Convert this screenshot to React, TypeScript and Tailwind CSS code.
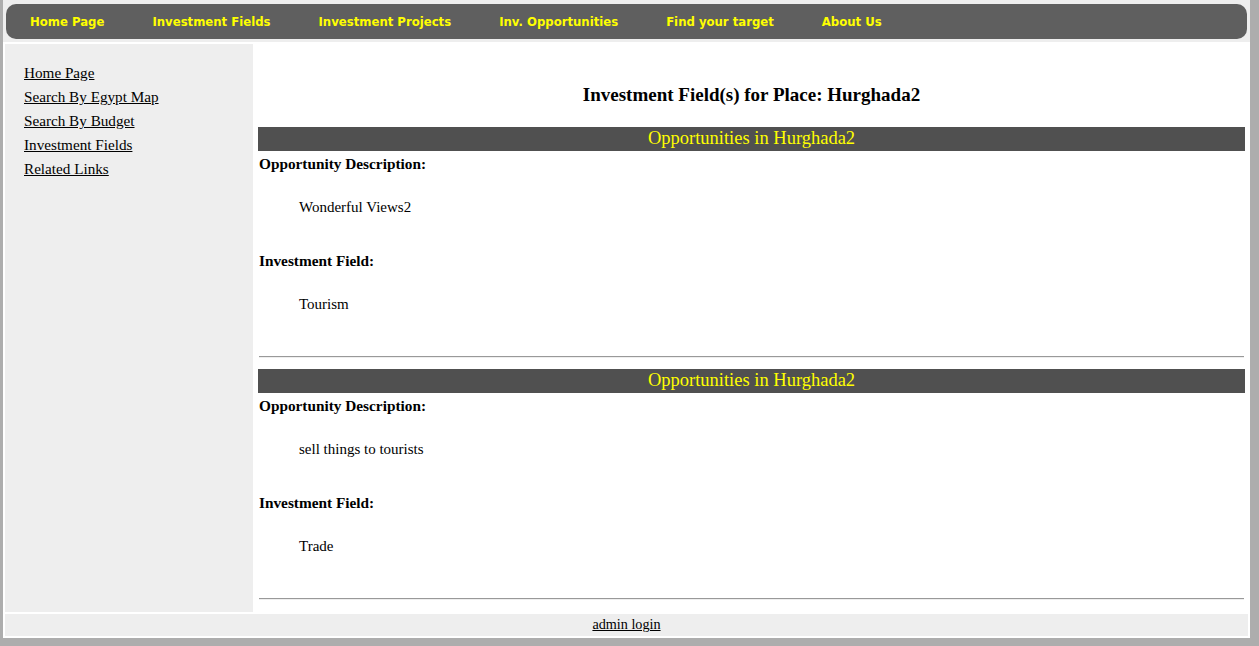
import React from 'react';

const navItems = ['Home Page', 'Investment Fields', 'Investment Projects', 'Inv. Opportunities', 'Find your target', 'About Us'];
const sideLinks = ['Home Page', 'Search By Egypt Map', 'Search By Budget', 'Investment Fields', 'Related Links'];

const opportunities = [
  { place: 'Hurghada2', description: 'Wonderful Views2', field: 'Tourism' },
  { place: 'Hurghada2', description: 'sell things to tourists', field: 'Trade' },
];

const serif = { fontFamily: '"Liberation Serif", "Times New Roman", serif' };

export default function App() {
  return (
    <div className="w-full h-[646px] bg-[#adadad] pl-[3px] pr-[9px] pb-[8px]">
      <div className="h-full bg-white flex flex-col" style={serif}>
        {/* top menu */}
        <div className="bg-[#eeeeee] pt-[4px] pb-[3px] pl-[3px] pr-[3px]">
          <div className="h-[35px] bg-[#5f5f5f] rounded-[10px] flex items-center pt-[2px]">
            {navItems.map((n) => (
              <a
                key={n}
                className="px-6 text-[11.7px] font-bold text-[#ffff00] whitespace-nowrap"
                style={{ fontFamily: '"DejaVu Sans", Verdana, sans-serif' }}
              >
                {n}
              </a>
            ))}
          </div>
        </div>

        <div className="flex-1 flex flex-col gap-[2px] p-[2px]">
          <div className="flex-1 flex gap-[2px]">
            {/* sidebar */}
            <div className="w-[248px] bg-[#eeeeee] pl-[19px] pt-[17px]">
              {sideLinks.map((l) => (
                <div key={l} className="h-[24px] leading-[24px]">
                  <a className="text-[15.2px] text-black underline">{l}</a>
                </div>
              ))}
            </div>

            {/* content */}
            <div className="flex-1 px-[3px] text-[15.3px] text-black">
              <h2 className="text-center font-bold text-[19px] leading-[21px] pt-[40px] pb-[22px]">
                Investment Field(s) for Place: Hurghada2
              </h2>
              {opportunities.map((o, i) => (
                <div key={i}>
                  <div className="h-[24px] bg-[#505050] text-[#ffff00] text-[18.5px] leading-[22px] text-center">
                    Opportunities in {o.place}
                  </div>
                  <div className="pl-[1px] pt-[4px] font-bold leading-[18px]">Opportunity Description:</div>
                  <div className="pl-[41px] mt-[25px] leading-[18px] text-[15px]">{o.description}</div>
                  <div className="pl-[1px] mt-[36px] font-bold leading-[18px]">Investment Field:</div>
                  <div className="pl-[41px] mt-[25px] leading-[18px] text-[15px]">{o.field}</div>
                  <div className="mx-[1px] mt-[43px] mb-[11px] border-t border-t-[#999999] border-b border-b-[#eeeeee]" />
                </div>
              ))}
            </div>
          </div>

          {/* footer */}
          <div className="h-[22px] bg-[#eeeeee] flex items-center justify-center">
            <a className="text-[14.2px] text-black underline">admin login</a>
          </div>
        </div>
      </div>
    </div>
  );
}
